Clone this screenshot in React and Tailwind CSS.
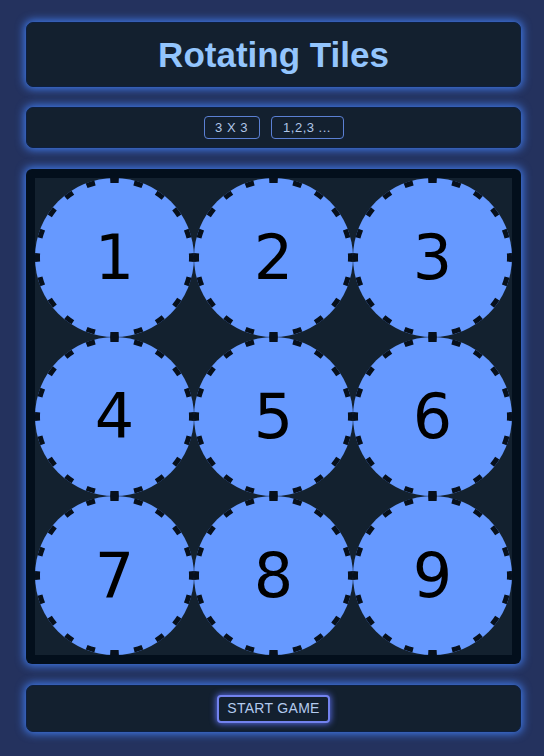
import React from "react";

const tiles = [1, 2, 3, 4, 5, 6, 7, 8, 9];

const panel =
  "w-[495px] ml-[26px] rounded-[7px] bg-[#13202f] border border-[#0d1f3f] shadow-[0_0_9px_2px_#3f78e6]";

// round tile: blue disc with a dashed dark rim, 20 dashes, one on each axis
const Tile = ({ n }) => (
  <div className="relative w-[159px] h-[159px] flex items-center justify-center">
    <svg
      className="absolute inset-0"
      width="159"
      height="159"
      viewBox="0 0 159 159"
    >
      <circle cx="79.5" cy="79.5" r="79.5" fill="#6699ff" />
      <circle
        cx="79.5"
        cy="79.5"
        r="77"
        fill="none"
        stroke="#07101c"
        strokeWidth="5"
        pathLength="200"
        strokeDasharray="3.6 6.4"
        strokeDashoffset="1.8"
      />
    </svg>
    <span className="relative text-[62px] leading-none text-black font-['DejaVu_Sans',sans-serif]">
      {n}
    </span>
  </div>
);

export default function App() {
  return (
    <div className="min-h-[756px] w-[544px] bg-[#24325e] pt-[22px] font-['Liberation_Sans',Arial,sans-serif]">
      <div className={`${panel} h-[65px] flex items-center justify-center`}>
        <h1 className="text-[35px] font-bold text-[#93c5fd] leading-none">
          Rotating Tiles
        </h1>
      </div>

      <div
        className={`${panel} h-[41px] mt-[20px] flex items-center justify-center gap-[11px]`}
      >
        <button className="h-[23px] w-[56px] rounded-[4px] border border-[#5b80d4] text-[13px] tracking-[0.5px] text-[#b0c6e8]">
          3 X 3
        </button>
        <button className="h-[23px] w-[73px] rounded-[4px] border border-[#5b80d4] text-[13px] tracking-[0.5px] text-[#b0c6e8]">
          1,2,3 ...
        </button>
      </div>

      <div className="w-[495px] ml-[26px] mt-[21px] rounded-[6px] bg-[#030f1c] p-[9px] shadow-[0_0_9px_2px_#3f78e6]">
        <div className="grid grid-cols-3 bg-[#13212f]">
          {tiles.map((n) => (
            <Tile key={n} n={n} />
          ))}
        </div>
      </div>

      <div
        className={`${panel} h-[47px] mt-[21px] flex items-center justify-center`}
      >
        <button className="h-[28px] w-[113px] rounded-[4px] border-2 border-[#7282ee] bg-[#13202f] text-[14px] tracking-[0.3px] text-[#b3cbef] shadow-[0_0_6px_1px_#5566dd]">
          START GAME
        </button>
      </div>
    </div>
  );
}
